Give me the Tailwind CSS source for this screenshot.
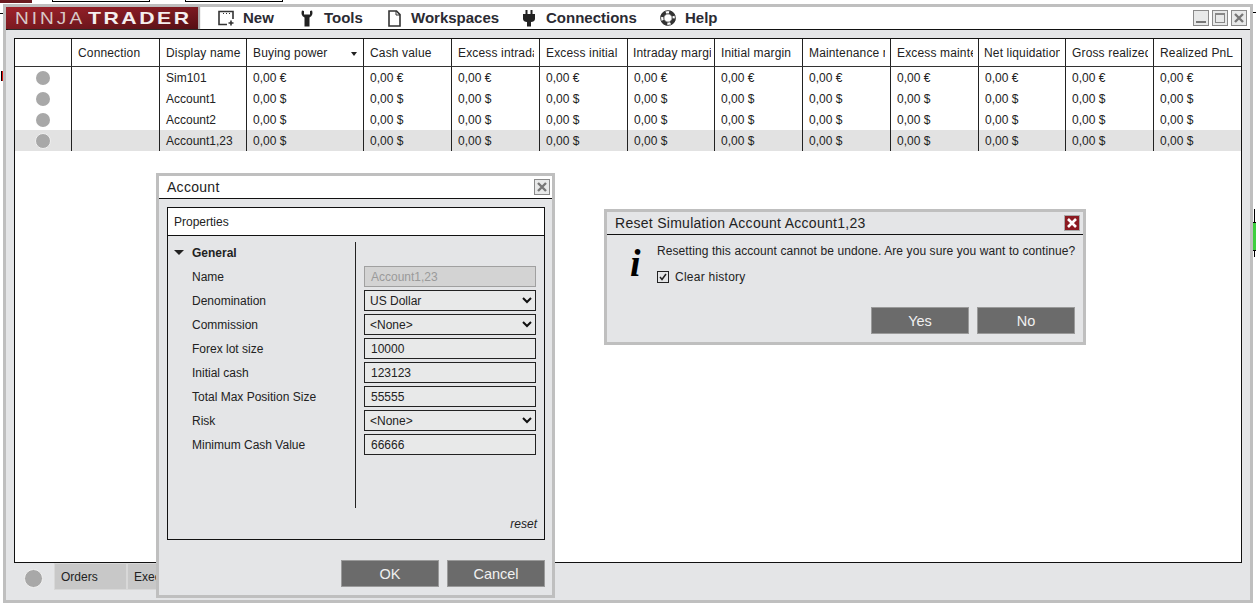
<!DOCTYPE html>
<html>
<head>
<meta charset="utf-8">
<script src="https://cdn.jsdelivr.net/npm/@tailwindcss/browser@4"></script>
</head>
<body class="bg-white overflow-hidden w-[1256px] h-[603px] relative font-['Liberation_Sans',Arial,sans-serif] text-[12px] text-[#222]">

<!-- bits of the desktop behind the window -->
<div class="absolute left-0 top-0 w-[32px] h-[3px] bg-[#6b1a20]"></div>
<div class="absolute left-[52px] top-0 w-[98px] h-[2px] border-b border-x border-black"></div>
<div class="absolute left-[185px] top-0 w-[98px] h-[2px] border-b border-x border-black"></div>
<div class="absolute left-0 top-[13px] w-[3px] h-px bg-black"></div>
<div class="absolute left-[1px] top-[71px] w-[2px] h-[10px] bg-[#e01010] border-l border-black"></div>
<div class="absolute left-[1252px] top-[12px] w-[4px] h-px bg-black"></div>
<div class="absolute left-[1254px] top-[209px] w-px h-[48px] bg-black"></div>
<div class="absolute left-[1253px] top-[222px] w-[3px] h-[29px] bg-[#3ecf3e] border-y border-black"></div>

<!-- main window -->
<div class="absolute left-[3px] top-[4px] w-[1250px] h-[599px] border-[3px] border-[#bfbfbf] bg-[#e4e5e7] flex flex-col">
  <!-- title bar -->
  <div class="h-[23px] shrink-0 bg-white border-b border-[#111] flex items-center">
    <div class="w-[192px] h-[22px] shrink-0 bg-gradient-to-br from-[#a0222b] via-[#7c1a21] to-[#561015] shadow-[2px_0_1px_#aaa] flex items-center pl-[9px] text-[17px] leading-none whitespace-nowrap">
      <span class="block w-[73px] shrink-0 origin-left scale-x-[1.12] tracking-[2.7px] text-[#d8c8c8] font-normal">NINJA</span><span class="block shrink-0 origin-left scale-x-[1.25] tracking-[2px] text-[#f4eeee] font-bold">TRADER</span>
    </div>
    <div class="flex items-center font-bold text-[15px] text-[#2b2b33] h-full">
      <div class="flex items-center ml-[20px]">
        <svg class="w-[16px] h-[16px]" viewBox="0 0 16 16" fill="none" stroke="#333"><path d="M9 14.5H1V1.5H15V9" stroke-width="1.6"/><path d="M5 3.5h1M8 3.5h1M11 3.5h1" stroke-width="1"/><path d="M13 10.5v5M10.5 13h5" stroke-width="1.6"/></svg>
        <span class="ml-[9px] w-[31px]">New</span>
      </div>
      <div class="flex items-center ml-[27px]">
        <svg class="w-[12px] h-[17px]" viewBox="0 0 12 17" fill="#222"><path d="M1 0.5C0 3 0.5 6 3.5 7.5V16.5H8.5V7.5C11.5 6 12 3 11 0.5L9 1V4.5H3V1Z"/></svg>
        <span class="ml-[11px] w-[40px]">Tools</span>
      </div>
      <div class="flex items-center ml-[24px]">
        <svg class="w-[13px] h-[17px]" viewBox="0 0 13 17" fill="none" stroke="#333" stroke-width="1.6"><path d="M1 1H8.5L12 4.6V16H1Z"/><path d="M8 1V5H12" stroke-width="1"/></svg>
        <span class="ml-[10px] w-[86px]">Workspaces</span>
      </div>
      <div class="flex items-center ml-[26px]">
        <svg class="w-[12px] h-[17px]" viewBox="0 0 12 17" fill="#222"><path d="M2.5 0h2v4h3V0h2v4H12V9C12 11 10 12 8 12V16.5H4V12C2 12 0 11 0 9V4H2.500Z"/></svg>
        <span class="ml-[11px] w-[90px]">Connections</span>
      </div>
      <div class="flex items-center ml-[24px]">
        <svg class="w-[16px] h-[16px]" viewBox="0 0 16 16" fill="none" stroke="#333"><circle cx="8" cy="8" r="6" stroke-width="3.2" stroke-dasharray="6 3.420" stroke-dashoffset="-0.500"/><circle cx="8" cy="8" r="7.400" stroke-width="0.900"/><circle cx="8" cy="8" r="4.200" stroke-width="0.900"/></svg>
        <span class="ml-[9px]">Help</span>
      </div>
    </div>
    <div class="ml-auto flex items-center gap-[3px] mr-[3px]">
      <div class="w-[16px] h-[16px] border border-[#8a8a8a] bg-[#e8e9e9] flex items-end justify-center pb-[2px]"><div class="w-[10px] h-[2px] bg-[#777]"></div></div>
      <div class="w-[16px] h-[16px] border border-[#8a8a8a] bg-[#e8e9e9] flex items-center justify-center"><div class="w-[10px] h-[10px] border border-[#888] border-t-2"></div></div>
      <div class="w-[16px] h-[16px] border border-[#8a8a8a] bg-[#e8e9e9] flex items-center justify-center">
        <svg class="w-[10px] h-[10px]" viewBox="0 0 10 10" stroke="#777" stroke-width="2.400"><path d="M1 1L9 9M9 1L1 9"/></svg>
      </div>
    </div>
  </div>

  <!-- content -->
  <div class="flex-1 flex flex-col px-[8px] pt-[8px]">
    <!-- account grid -->
    <div class="h-[525px] shrink-0 bg-white border border-[#111]">
      <div class="grid grid-cols-[57px_88px_87px_117px_88px_88px_88px_87px_88px_88px_88px_87px_88px_87px] h-[28px] border-b border-[#333] items-stretch tracking-[0.15px] [&>div]:border-r [&>div]:border-[#222] [&>div]:pl-[6px] [&>div]:pr-[5px] [&>div]:flex [&>div]:items-center [&>div:last-child]:border-r-0 [&_span]:block [&_span]:w-full [&_span]:overflow-hidden [&_span]:whitespace-nowrap">
        <div></div>
        <div><span>Connection</span></div>
        <div><span>Display name</span></div>
        <div class="relative"><span>Buying power</span><i class="absolute left-[104px] top-[13px] border-x-[3.500px] border-x-transparent border-t-[4px] border-t-[#222]"></i></div>
        <div><span>Cash value</span></div>
        <div><span>Excess intraday</span></div>
        <div><span>Excess initial</span></div>
        <div class="!pl-[5px] !pr-[3px]"><span>Intraday margin</span></div>
        <div><span>Initial margin</span></div>
        <div><span>Maintenance margin</span></div>
        <div><span>Excess maintenance</span></div>
        <div class="!pl-[5px]"><span>Net liquidation</span></div>
        <div><span>Gross realized</span></div>
        <div><span>Realized PnL</span></div>
      </div>
      <div class="grid grid-cols-[57px_88px_87px_117px_88px_88px_88px_87px_88px_88px_88px_87px_88px_87px] h-[21px] items-stretch [&>div]:border-r [&>div]:border-[#222] [&>div]:pl-[6px] [&>div]:flex [&>div]:items-center [&>div:last-child]:border-r-0">
        <div class="justify-center !pl-0"><i class="block w-[14px] h-[14px] rounded-full bg-[#a8a8a8]"></i></div>
        <div></div><div>Sim101</div>
        <div>0,00 €</div><div>0,00 €</div><div>0,00 €</div><div>0,00 €</div><div>0,00 €</div><div>0,00 €</div><div>0,00 €</div><div>0,00 €</div><div>0,00 €</div><div>0,00 €</div><div>0,00 €</div>
      </div>
      <div class="grid grid-cols-[57px_88px_87px_117px_88px_88px_88px_87px_88px_88px_88px_87px_88px_87px] h-[21px] items-stretch [&>div]:border-r [&>div]:border-[#222] [&>div]:pl-[6px] [&>div]:flex [&>div]:items-center [&>div:last-child]:border-r-0">
        <div class="justify-center !pl-0"><i class="block w-[14px] h-[14px] rounded-full bg-[#a8a8a8]"></i></div>
        <div></div><div>Account1</div>
        <div>0,00 $</div><div>0,00 $</div><div>0,00 $</div><div>0,00 $</div><div>0,00 $</div><div>0,00 $</div><div>0,00 $</div><div>0,00 $</div><div>0,00 $</div><div>0,00 $</div><div>0,00 $</div>
      </div>
      <div class="grid grid-cols-[57px_88px_87px_117px_88px_88px_88px_87px_88px_88px_88px_87px_88px_87px] h-[21px] items-stretch [&>div]:border-r [&>div]:border-[#222] [&>div]:pl-[6px] [&>div]:flex [&>div]:items-center [&>div:last-child]:border-r-0">
        <div class="justify-center !pl-0"><i class="block w-[14px] h-[14px] rounded-full bg-[#a8a8a8]"></i></div>
        <div></div><div>Account2</div>
        <div>0,00 $</div><div>0,00 $</div><div>0,00 $</div><div>0,00 $</div><div>0,00 $</div><div>0,00 $</div><div>0,00 $</div><div>0,00 $</div><div>0,00 $</div><div>0,00 $</div><div>0,00 $</div>
      </div>
      <div class="grid grid-cols-[57px_88px_87px_117px_88px_88px_88px_87px_88px_88px_88px_87px_88px_87px] h-[21px] bg-[#e2e2e2] items-stretch [&>div]:border-r [&>div]:border-[#222] [&>div]:pl-[6px] [&>div]:flex [&>div]:items-center [&>div:last-child]:border-r-0">
        <div class="justify-center !pl-0"><i class="block w-[16px] h-[16px] rounded-full bg-[#a8a8a8] border border-[#f0f0f0]"></i></div>
        <div></div><div>Account1,23</div>
        <div>0,00 $</div><div>0,00 $</div><div>0,00 $</div><div>0,00 $</div><div>0,00 $</div><div>0,00 $</div><div>0,00 $</div><div>0,00 $</div><div>0,00 $</div><div>0,00 $</div><div>0,00 $</div>
      </div>
    </div>
    <!-- bottom tabs -->
    <div class="flex items-start">
      <i class="block w-[19px] h-[19px] rounded-full bg-[#a8a8a8] border border-[#f0f0f0] mt-[6px] ml-[10px] mr-[11px]"></i>
      <div class="w-[73px] h-[27px] bg-[#c8c8c8] border border-[#d8d8d8] pl-[6px] flex items-center">Orders</div>
      <div class="w-[73px] h-[27px] bg-[#c8c8c8] border border-[#d8d8d8] pl-[6px] flex items-center">Executions</div>
    </div>
  </div>
</div>

<!-- Account dialog -->
<div class="absolute left-[156px] top-[173px] w-[399px] h-[425px] border-[3px] border-[#bfbfbf] bg-[#e4e5e7] flex flex-col">
  <div class="h-[23px] shrink-0 bg-white border-b border-[#111] flex items-center justify-between pl-[8px] pr-[2px] text-[14px] tracking-[0.28px]">
    <span>Account</span>
    <div class="w-[16px] h-[16px] border border-[#8a8a8a] bg-[#e8e9e9] flex items-center justify-center">
      <svg class="w-[10px] h-[10px]" viewBox="0 0 10 10" stroke="#777" stroke-width="2.400"><path d="M1 1L9 9M9 1L1 9"/></svg>
    </div>
  </div>
  <div class="ml-[8px] mt-[8px] w-[378px] h-[333px] border border-[#111] flex flex-col">
    <div class="h-[28px] shrink-0 bg-white border-b border-[#111] pl-[6px] flex items-center">Properties</div>
    <div class="relative flex-1 pt-[6px]">
      <div class="absolute left-[187px] top-[6px] w-px h-[266px] bg-[#222]"></div>
      <div class="flex flex-col gap-[3px]">
        <div class="h-[21px] flex items-center font-bold"><i class="block ml-[6px] mr-[8px] border-x-[5px] border-x-transparent border-t-[5px] border-t-[#222]"></i>General</div>
        <div class="h-[21px] flex items-center pl-[24px]"><span class="w-[172px]">Name</span><div class="w-[172px] h-[21px] bg-[#d3d3d3] border border-[#a0a0a0] text-[#9a9a9a] pl-[6px] flex items-center">Account1,23</div></div>
        <div class="h-[21px] flex items-center pl-[24px]"><span class="w-[172px]">Denomination</span><div class="w-[172px] h-[21px] bg-[#e8e9e9] border border-[#222] pl-[5px] pr-[3px] flex items-center justify-between">US Dollar<svg class="w-[10px] h-[7px]" viewBox="0 0 10 7" fill="none" stroke="#111" stroke-width="2"><path d="M1 1L5 5L9 1"/></svg></div></div>
        <div class="h-[21px] flex items-center pl-[24px]"><span class="w-[172px]">Commission</span><div class="w-[172px] h-[21px] bg-[#e8e9e9] border border-[#222] pl-[5px] pr-[3px] flex items-center justify-between">&lt;None&gt;<svg class="w-[10px] h-[7px]" viewBox="0 0 10 7" fill="none" stroke="#111" stroke-width="2"><path d="M1 1L5 5L9 1"/></svg></div></div>
        <div class="h-[21px] flex items-center pl-[24px]"><span class="w-[172px]">Forex lot size</span><div class="w-[172px] h-[21px] bg-[#e8e9e9] border border-[#222] pl-[6px] flex items-center">10000</div></div>
        <div class="h-[21px] flex items-center pl-[24px]"><span class="w-[172px]">Initial cash</span><div class="w-[172px] h-[21px] bg-[#e8e9e9] border border-[#222] pl-[6px] flex items-center">123123</div></div>
        <div class="h-[21px] flex items-center pl-[24px]"><span class="w-[172px]">Total Max Position Size</span><div class="w-[172px] h-[21px] bg-[#e8e9e9] border border-[#222] pl-[6px] flex items-center">55555</div></div>
        <div class="h-[21px] flex items-center pl-[24px]"><span class="w-[172px]">Risk</span><div class="w-[172px] h-[21px] bg-[#e8e9e9] border border-[#222] pl-[5px] pr-[3px] flex items-center justify-between">&lt;None&gt;<svg class="w-[10px] h-[7px]" viewBox="0 0 10 7" fill="none" stroke="#111" stroke-width="2"><path d="M1 1L5 5L9 1"/></svg></div></div>
        <div class="h-[21px] flex items-center pl-[24px]"><span class="w-[172px]">Minimum Cash Value</span><div class="w-[172px] h-[21px] bg-[#e8e9e9] border border-[#222] pl-[6px] flex items-center">66666</div></div>
      </div>
      <div class="absolute right-[7px] bottom-[6px] italic">reset</div>
    </div>
  </div>
  <div class="flex justify-end gap-[8px] mr-[7px] mt-[20px]">
    <div class="w-[98px] h-[27px] bg-[#6b6b6b] border border-[#9a9a9a] text-[#f0f0f0] text-[14.5px] pt-[2px] flex items-center justify-center">OK</div>
    <div class="w-[98px] h-[27px] bg-[#6b6b6b] border border-[#9a9a9a] text-[#f0f0f0] text-[14.5px] pt-[2px] flex items-center justify-center">Cancel</div>
  </div>
</div>

<!-- Reset dialog -->
<div class="absolute left-[604px] top-[209px] w-[482px] h-[136px] border-[3px] border-[#bfbfbf] bg-[#e4e5e7] flex flex-col">
  <div class="h-[23px] shrink-0 border-b border-[#111] flex items-center justify-between pl-[8px] pr-[3px] text-[14px] tracking-[0.28px]">
    <span>Reset Simulation Account Account1,23</span>
    <div class="w-[16px] h-[16px] bg-[#8b1a22] border border-[#aaa] flex items-center justify-center">
      <svg class="w-[10px] h-[10px]" viewBox="0 0 10 10" stroke="#fff" stroke-width="2.600"><path d="M1 1L9 9M9 1L1 9"/></svg>
    </div>
  </div>
  <div class="flex">
    <div class="w-[50px] shrink-0 pl-[23px] pt-[9px] font-['Liberation_Serif',serif] font-bold italic text-[38px] leading-[38px] text-black">i</div>
    <div class="pt-[9px]">
      <div class="tracking-[0.09px] leading-[15px] whitespace-nowrap">Resetting this account cannot be undone. Are you sure you want to continue?</div>
      <div class="flex items-center mt-[9px]">
        <div class="w-[12px] h-[12px] border border-[#222] flex items-center justify-center"><svg class="w-[8px] h-[8px]" viewBox="0 0 8 8" fill="none" stroke="#222" stroke-width="1.500"><path d="M1 4L3 6.500L7 1"/></svg></div>
        <span class="ml-[6px] tracking-[0.25px]">Clear history</span>
      </div>
    </div>
  </div>
  <div class="flex justify-end gap-[8px] mr-[8px] mt-auto mb-[8px]">
    <div class="w-[98px] h-[27px] bg-[#6b6b6b] border border-[#9a9a9a] text-[#f0f0f0] text-[14.5px] pt-[2px] flex items-center justify-center">Yes</div>
    <div class="w-[98px] h-[27px] bg-[#6b6b6b] border border-[#9a9a9a] text-[#f0f0f0] text-[14.5px] pt-[2px] flex items-center justify-center">No</div>
  </div>
</div>
</body>
</html>
